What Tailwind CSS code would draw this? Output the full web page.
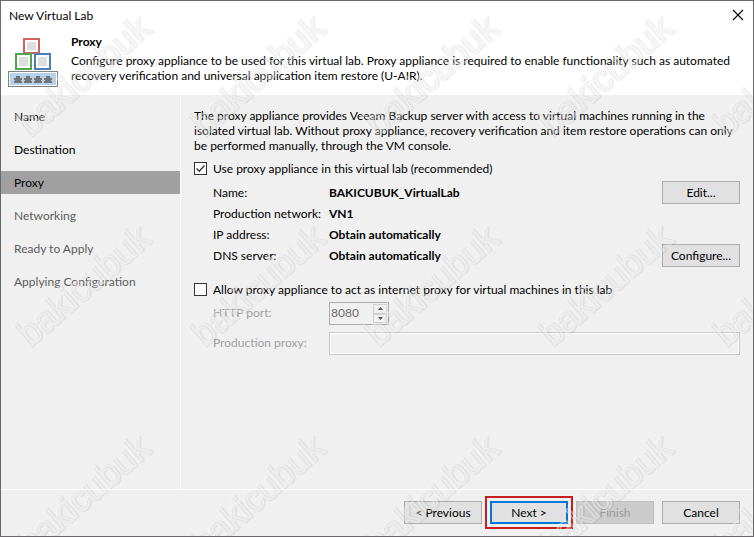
<!DOCTYPE html>
<html lang="en">

<head>
    <meta charset="UTF-8" />
    <meta name="viewport" content="width=device-width, initial-scale=1" />
    <title>New Virtual Lab</title>
    <script src="https://cdn.jsdelivr.net/npm/@tailwindcss/browser@4"></script>
</head>

<body class="font-['Lato','Noto_Sans',sans-serif] text-[12px] leading-[15px] text-black">
    <div class="relative min-h-screen flex flex-col border border-[#6b696b] bg-[#f0f0f0] overflow-hidden">
        <header class="bg-white pb-2">
            <div class="flex items-center justify-between h-7 pl-2 pr-[5px]">
                <h1>New Virtual Lab</h1>
                <button type="button" aria-label="Close" class="p-1">
                    <svg class="w-3 h-3" viewBox="0 0 12 12" fill="none" stroke="#000" stroke-width="1.1">
                        <path d="M1 1l10 10M11 1L1 11" />
                    </svg>
                </button>
            </div>
            <div class="flex pl-[7px] pr-4 gap-3 pt-1">
                <svg class="w-[51px] h-[54px] shrink-0" viewBox="0 0 51 54" fill="none">
                    <g stroke-width="2">
                        <rect x="16" y="6" width="15" height="14" stroke="#d2605e" fill="#fff" />
                        <rect x="8" y="21" width="15" height="15" stroke="#4fa64b" fill="#fff" />
                        <rect x="27" y="21" width="15" height="15" stroke="#4a7fb8" fill="#fff" />
                    </g>
                    <path d="M19 9h9v8h-9zM11 24h9v9h-9zM30 24h9v9h-9z" fill="#dedede" />
                    <rect x="0.5" y="38.5" width="49" height="15" fill="#fff" stroke="#7d8286" />
                    <rect x="2" y="40" width="46" height="12" fill="#b5d1ec" />
                    <g fill="#737373">
                        <path d="M8 43h4v2h2v2h-1v1h1v2h-8v-2h1v-1h-1v-2h2z" />
                        <path d="M18 43h4v2h2v2h-1v1h1v2h-8v-2h1v-1h-1v-2h2z" />
                        <path d="M28 43h4v2h2v2h-1v1h1v2h-8v-2h1v-1h-1v-2h2z" />
                        <path d="M38 43h4v2h2v2h-1v1h1v2h-8v-2h1v-1h-1v-2h2z" />
                    </g>
                </svg>
                <div>
                    <h2 class="font-bold mt-px">Proxy</h2>
                    <p class="mt-1">Configure proxy appliance to be used for this virtual lab. Proxy appliance is required to enable functionality such as automated recovery verification and universal application item restore (U-AIR).</p>
                </div>
            </div>
        </header>

        <main class="flex flex-1">
            <nav class="w-[180px] shrink-0 border-r border-white pt-[10px] leading-[23px]">
                <a href="#" class="block px-[13px] mb-[10px]">Name</a>
                <a href="#" class="block px-[13px] mb-[10px]">Destination</a>
                <a href="#" aria-current="step" class="block px-[13px] mb-[10px] bg-[#a0a0a0]">Proxy</a>
                <a href="#" class="block px-[13px] mb-[10px] text-[#5d5d5d]">Networking</a>
                <a href="#" class="block px-[13px] mb-[10px] text-[#5d5d5d]">Ready to Apply</a>
                <a href="#" class="block px-[13px] text-[#5d5d5d]">Applying Configuration</a>
            </nav>

            <form class="flex-1 px-[13px] pt-[13px]">
                <p>The proxy appliance provides Veeam Backup server with access to virtual machines running in the isolated virtual lab. Without proxy appliance, recovery verification and item restore operations can only be performed manually, through the VM console.</p>

                <label class="flex items-center gap-[6px] mt-2">
                    <span class="relative w-[13px] h-[13px]">
                        <input type="checkbox" checked class="peer block appearance-none w-[13px] h-[13px] bg-white border border-[#333]" />
                        <svg class="absolute inset-0 hidden peer-checked:block pointer-events-none" viewBox="0 0 13 13" fill="none" stroke="#333" stroke-width="1.3">
                            <path d="M2.5 6.5l2.8 2.8L10.5 3.5" />
                        </svg>
                    </span>
                    Use proxy appliance in this virtual lab (recommended)
                </label>

                <dl class="grid grid-cols-[116px_1fr_78px] auto-rows-[21px] items-center mt-[6px] pl-[19px]">
                    <dt>Name:</dt>
                    <dd class="font-bold">BAKICUBUK_VirtualLab</dd>
                    <dd><button type="button" class="block w-full h-[23px] bg-[#e1e1e1] border border-[#adadad]">Edit...</button></dd>
                    <dt>Production network:</dt>
                    <dd class="font-bold col-span-2">VN1</dd>
                    <dt>IP address:</dt>
                    <dd class="font-bold col-span-2">Obtain automatically</dd>
                    <dt>DNS server:</dt>
                    <dd class="font-bold">Obtain automatically</dd>
                    <dd><button type="button" class="block w-full h-[23px] bg-[#e1e1e1] border border-[#adadad]">Configure...</button></dd>
                </dl>

                <label class="flex items-center gap-[6px] mt-4">
                    <span class="relative w-[13px] h-[13px]">
                        <input type="checkbox" class="peer block appearance-none w-[13px] h-[13px] bg-white border border-[#333]" />
                        <svg class="absolute inset-0 hidden peer-checked:block pointer-events-none" viewBox="0 0 13 13" fill="none" stroke="#333" stroke-width="1.3">
                            <path d="M2.5 6.5l2.8 2.8L10.5 3.5" />
                        </svg>
                    </span>
                    Allow proxy appliance to act as internet proxy for virtual machines in this lab
                </label>

                <div class="grid grid-cols-[116px_1fr] gap-y-[7px] mt-[5px] pl-[19px] text-[#a0a0a0]">
                    <label for="http-port" class="pt-[3px]">HTTP port:</label>
                    <div class="flex w-[60px] h-[23px] border border-[#adadad]">
                        <input id="http-port" type="text" value="8080" disabled class="flex-1 min-w-0 pl-px pb-[3px] text-[#6d6d6d]" />
                        <div class="flex flex-col w-[15px] py-px pr-px">
                            <button type="button" aria-label="Increase port" disabled class="flex-1 flex items-center justify-center border border-[#d0d0d0]">
                                <svg class="w-[5px] h-[3px]" viewBox="0 0 5 3" fill="#555"><path d="M0 3L2.5 0 5 3z" /></svg>
                            </button>
                            <button type="button" aria-label="Decrease port" disabled class="flex-1 flex items-center justify-center border border-[#d0d0d0]">
                                <svg class="w-[5px] h-[3px]" viewBox="0 0 5 3" fill="#555"><path d="M0 0h5L2.5 3z" /></svg>
                            </button>
                        </div>
                    </div>
                    <label for="production-proxy" class="pt-[3px]">Production proxy:</label>
                    <input id="production-proxy" type="text" disabled class="w-full h-[23px] border border-[#c8c8c8] shadow-[inset_0_0_0_1px_#fff]" />
                </div>
            </form>
        </main>

        <footer class="flex justify-end gap-2 h-[47px] pt-[11px] pr-[13px] border-t border-white">
            <button type="button" class="w-[78px] h-[23px] bg-[#e1e1e1] border border-[#adadad]">&lt; Previous</button>
            <button type="button" class="w-[78px] h-[23px] bg-[#e1e1e1] border-2 border-[#0078d7] outline-2 outline-offset-3 outline-[#c81e1e]">Next &gt;</button>
            <button type="button" disabled class="w-[78px] h-[23px] bg-[#cccccc] border border-[#bfbfbf] text-[#9a9a9a]">Finish</button>
            <button type="button" class="w-[78px] h-[23px] bg-[#e1e1e1] border border-[#adadad]">Cancel</button>
        </footer>

        <!-- watermark -->
        <svg class="absolute inset-0 w-full h-full pointer-events-none" aria-hidden="true">
            <defs>
                <pattern id="mark" x="10" y="0" width="174" height="210" patternUnits="userSpaceOnUse">
                    <g transform="translate(18 137) rotate(-41)" font-family="Liberation Sans, sans-serif" font-size="36" fill="none" stroke-linejoin="round">
                        <text x="1" y="1" stroke="#000" stroke-opacity="0.06" stroke-width="3">bakicubuk</text>
                        <text stroke="#fff" stroke-opacity="0.4" stroke-width="2">bakicubuk</text>
                    </g>
                </pattern>
            </defs>
            <rect width="100%" height="100%" fill="url(#mark)" />
        </svg>
    </div>
</body>

</html>
